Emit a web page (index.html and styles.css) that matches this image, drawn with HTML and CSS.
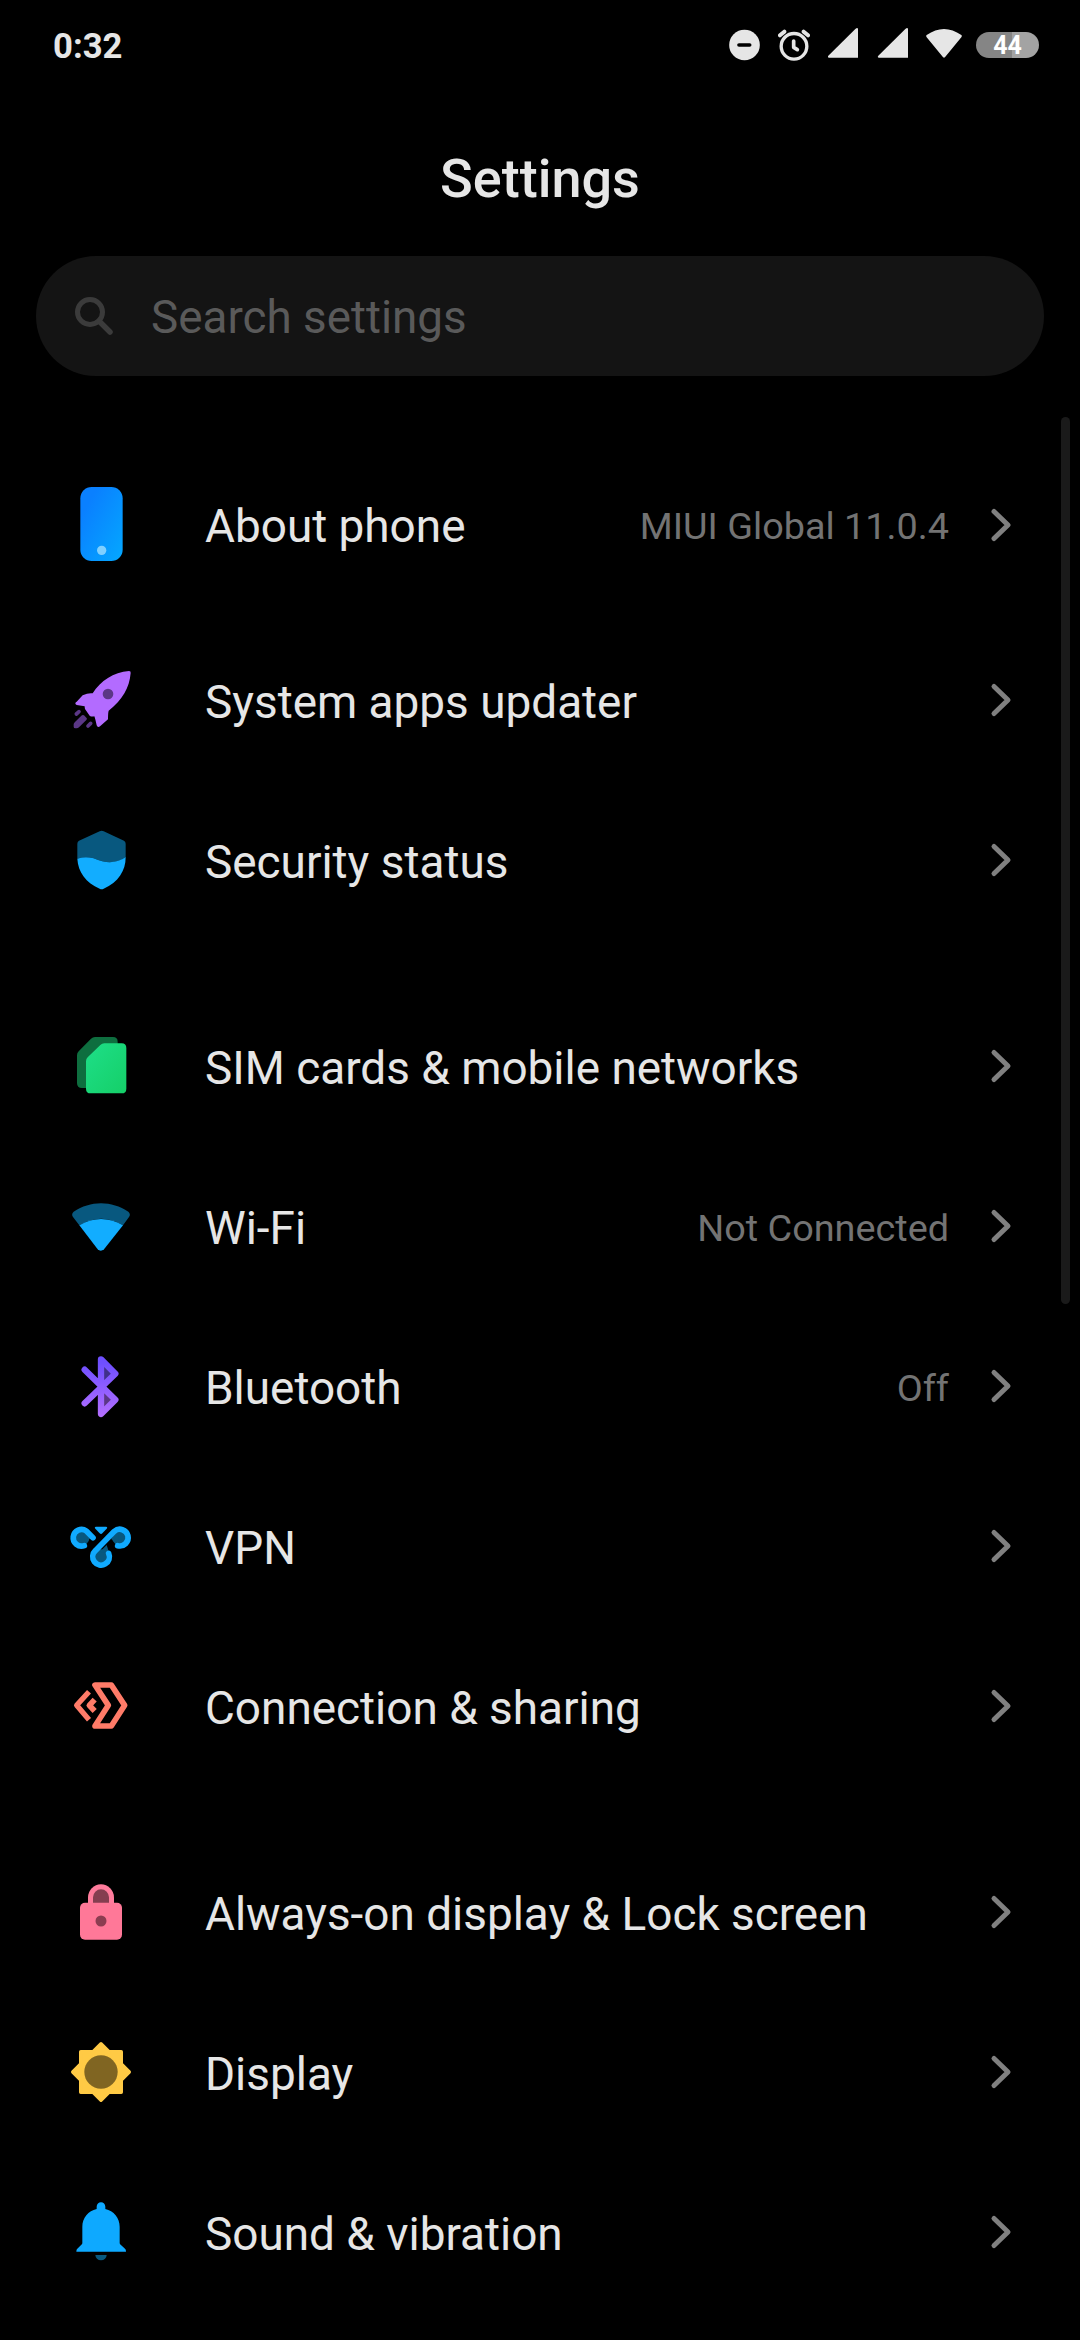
FILE: index.html
```html
<!DOCTYPE html>
<html>
<head>
  <meta charset="UTF-8">
  <title>Settings</title>
  <link rel="stylesheet" href="styles.css">
</head>
<body>
  <div class="statusbar">
    <span class="time">0:32</span>
    <div class="status-icons">
      <svg width="31" height="40" viewBox="87 45 93 120"><circle cx="133.500" cy="105" r="46" fill="#e6e6e6"/><path d="M117 105h32" stroke="#000" stroke-width="11" stroke-linecap="round"/></svg>
      <svg width="32" height="40" viewBox="234 45 96 120" fill="none" stroke="#e6e6e6" stroke-linecap="round" stroke-linejoin="round"><circle cx="282" cy="109" r="38.500" stroke-width="10"/><path d="M281 93v19l11 7" stroke-width="11"/><path d="M240 76l13-11M324 76l-13-11" stroke-width="12"/></svg>
      <svg width="30" height="40" viewBox="384 45 90 120"><path d="M474 57v86h-87q-6-1-2-6l81-80q7-6 8 0z" fill="#e6e6e6"/></svg>
      <svg width="32" height="40" viewBox="528 45 96 120"><path d="M624 57v86h-87q-6-1-2-6l81-80q7-6 8 0z" fill="#e6e6e6"/></svg>
      <svg width="36" height="40" viewBox="678 45 108 120"><path d="M680 75Q732 39 784 75q3 3 0 7l-48 58q-4 5-8 0l-48-58q-3-4 0-7z" fill="#e6e6e6"/></svg>
      <span class="battery">44</span>
    </div>
  </div>

  <h1 class="title">Settings</h1>

  <div class="search">
    <svg class="search-icon" width="40" height="40" viewBox="0 0 40 40" fill="none" stroke="#3b3b3b" stroke-width="5"><circle cx="16" cy="16" r="12.500"/><path d="M25 25l11 11" stroke-width="5.500" stroke-linecap="round"/></svg>
    <span>Search settings</span>
  </div>

  <div class="scrollbar"></div>

  <div class="list">
    <div class="group">
      <div class="row about">
        <svg class="icon" viewBox="0 0 330 330">
          <defs><linearGradient id="phone" x1="0" y1="0" x2="1" y2="1"><stop offset="0.200" stop-color="#0a80ff"/><stop offset="1" stop-color="#04a8ff"/></linearGradient></defs>
          <rect x="91" y="51" width="127" height="222" rx="34" fill="url(#phone)"/><circle cx="155" cy="241" r="14" fill="#80d0ff"/>
        </svg>
        <span class="label">About phone</span>
        <span class="value">MIUI Global 11.0.4</span>
        <svg class="arrow" viewBox="0 0 24 36"><path d="M4 4.500l14 13.500l-14 13.500"/></svg>
      </div>
      <div class="row">
        <svg class="icon" viewBox="0 -15 330 330">
          <path d="M237 63q6 0 5 6c-4 45-24 80-66 113q-2 5-2 26l-23 20q-8 7-11-2-4-19-7-27-9 2-14-2l-14-20q-1-5-1-8l-24-4q-8-5 0-10l18-19q17-8 30-6C152 93 190 66 237 63z" fill="#b36bff"/>
          <circle cx="174" cy="132" r="16" fill="#5b3786"/>
          <path d="M79 192l8-7M114 228l8-8" stroke="#5b3786" stroke-width="11" stroke-linecap="round"/>
          <path d="M94 197q4-4 8-1l7 7q4 3 0 7l-22 22q-3 3-7 3h-4q-5 0-5-5v-7q0-3 4-7z" fill="#5b3786"/>
        </svg>
        <span class="label">System apps updater</span>
        <svg class="arrow" viewBox="0 0 24 36"><path d="M4 4.500l14 13.500l-14 13.500"/></svg>
      </div>
      <div class="row">
        <svg class="icon" viewBox="0 465 330 330">
          <path d="M82 626v-45q0-6 5-9l62-28q6-3 12 0l61 28q5 3 5 9v43q-20 12-48 13-20 0-48-12-25-7-49 1z" fill="#08587f"/>
          <path d="M82 626q24-8 49-1 28 12 48 12 28-1 48-15c0 40-22 75-66 94q-6 3-12 0c-41-18-65-50-67-90z" fill="#12adff"/>
        </svg>
        <span class="label">Security status</span>
        <svg class="arrow" viewBox="0 0 24 36"><path d="M4 4.500l14 13.500l-14 13.500"/></svg>
      </div>
    </div>

    <div class="group">
      <div class="row">
        <svg class="icon" viewBox="0 -27 330 330">
          <defs><linearGradient id="sim" x1="0" y1="0" x2="1" y2="1"><stop offset="0.100" stop-color="#1ddd85"/><stop offset="1" stop-color="#15cf68"/></linearGradient></defs>
          <path d="M135 51h54q14 0 14 14v139h-107q-15 0-15-15v-83q0-7 5-12l37-38q5-5 12-5z" fill="#0e6e3f"/>
          <path d="M163 70h52q14 0 14 14v122q0 14-14 14h-93q-14 0-14-14v-82q0-7 5-12l38-37q5-5 12-5z" fill="url(#sim)"/>
        </svg>
        <span class="label">SIM cards &amp; mobile networks</span>
        <svg class="arrow" viewBox="0 0 24 36"><path d="M4 4.500l14 13.500l-14 13.500"/></svg>
      </div>
      <div class="row">
        <svg class="icon" viewBox="0 453 330 330">
          <path d="M88 616l-19-25q-6-9 2-16c50-34 114-34 164 0q8 7 2 16l-18 25q-65-39-131 0z" fill="#08587f"/>
          <path d="M88 616q65-38 131 0l-57 72q-10 8-19 0z" fill="#12adff"/>
        </svg>
        <span class="label">Wi-Fi</span>
        <span class="value">Not Connected</span>
        <svg class="arrow" viewBox="0 0 24 36"><path d="M4 4.500l14 13.500l-14 13.500"/></svg>
      </div>
      <div class="row">
        <svg class="icon" viewBox="0 -27 330 330">
          <defs><linearGradient id="bt" gradientUnits="userSpaceOnUse" x1="150" y1="50" x2="150" y2="230"><stop offset="0.100" stop-color="#6e4fff"/><stop offset="1" stop-color="#b46fff"/></linearGradient></defs>
          <path d="M153 58l43 43l-43 40z" fill="#40308c"/>
          <path d="M153 141l43 38l-43 43z" fill="#5b3786"/>
          <path d="M104 89l92 90l-43 43V58l43 43l-92 89" fill="none" stroke="url(#bt)" stroke-width="19" stroke-linecap="round" stroke-linejoin="round"/>
        </svg>
        <span class="label">Bluetooth</span>
        <span class="value">Off</span>
        <svg class="arrow" viewBox="0 0 24 36"><path d="M4 4.500l14 13.500l-14 13.500"/></svg>
      </div>
      <div class="row">
        <svg class="icon" viewBox="0 453 330 330">
          <g fill="#08587f"><circle cx="94" cy="593" r="24"/><circle cx="211" cy="593" r="24"/><circle cx="153" cy="652" r="24"/><path d="M100 575l20 20-15 20zM207 573l-24 23 20 20zM150 635l20-20 8 25z"/></g>
          <path d="M103 617a25 25 0 1 1 6-44l20 20M203 617a25 25 0 1 0-10-43l-57 58a25 25 0 1 0 40 8" fill="none" stroke="#10aaff" stroke-width="17" stroke-linecap="round" stroke-linejoin="round"/>
          <path d="M138 560h30q6 1 2 6l-13 14q-4 4-8 0l-13-14q-4-5 2-6z" fill="#10aaff"/>
        </svg>
        <span class="label">VPN</span>
        <svg class="arrow" viewBox="0 0 24 36"><path d="M4 4.500l14 13.500l-14 13.500"/></svg>
      </div>
      <div class="row">
        <svg class="icon" viewBox="0 -27 330 330" fill="none" stroke="#ff7b68" stroke-linejoin="round">
          <path d="M135 75h49l40 61l-40 62h-49l40-62z" stroke-width="17"/>
          <path d="M117 95l-37 41l37 43" stroke-width="16"/>
          <path d="M134 119l-16 17l16 17" stroke-width="17"/>
        </svg>
        <span class="label">Connection &amp; sharing</span>
        <svg class="arrow" viewBox="0 0 24 36"><path d="M4 4.500l14 13.500l-14 13.500"/></svg>
      </div>
    </div>

    <div class="group">
      <div class="row">
        <svg class="icon" viewBox="0 -9 330 330">
          <path d="M114 135v-23a39 39 0 0 1 78 0v23z" fill="#ff7c9c"/>
          <path d="M129 129v-17a24 24 0 0 1 48 0v17z" fill="#843e50"/>
          <rect x="90" y="128" width="126" height="111" rx="15" fill="#ff7898"/><circle cx="153" cy="183" r="16.500" fill="#8c3d51"/>
        </svg>
        <span class="label">Always-on display &amp; Lock screen</span>
        <svg class="arrow" viewBox="0 0 24 36"><path d="M4 4.500l14 13.500l-14 13.500"/></svg>
      </div>
      <div class="row">
        <svg class="icon" viewBox="0 471 330 330">
          <path d="M153 551l24 24h37v37l24 24l-24 24v37h-37l-24 24l-24-24h-37v-37l-24-24l24-24v-37h37z" fill="#ffca45" stroke="#ffca45" stroke-width="10" stroke-linejoin="round"/>
          <circle cx="153" cy="636" r="50" fill="#806522"/>
        </svg>
        <span class="label">Display</span>
        <svg class="arrow" viewBox="0 0 24 36"><path d="M4 4.500l14 13.500l-14 13.500"/></svg>
      </div>
      <div class="row">
        <svg class="icon" viewBox="0 -9 330 330">
          <path d="M136 225h34a17 16 0 0 1-34 0z" fill="#08587f"/>
          <path d="M140 87v-7a13 13 0 0 1 26 0v7c25 5 43 27 43 53v49q0 3 3 5l13 12q3 2 3 9H79q0-7 3-9l12-12q3-2 3-5v-49c0-26 18-48 43-53z" fill="#0ea9ff"/>
        </svg>
        <span class="label">Sound &amp; vibration</span>
        <svg class="arrow" viewBox="0 0 24 36"><path d="M4 4.500l14 13.500l-14 13.500"/></svg>
      </div>
    </div>
  </div>
</body>
</html>
```
FILE: styles.css
```css
* {
  margin: 0;
  padding: 0;
  box-sizing: border-box;
}
body {
  height: 2340px;
  background: #000;
  color: #e6e6e6;
  font-family: Roboto, sans-serif;
  overflow: hidden;
}
svg {
  display: block;
  flex: none;
}
.statusbar {
  display: flex;
  justify-content: space-between;
  align-items: center;
  height: 90px;
  padding: 0 41px 0 53px;
}
.time {
  font-size: 34.7px;
  font-weight: 700;
  line-height: 40px;
  padding-top: 2px;
}
.status-icons {
  display: flex;
  align-items: center;
  gap: 18px;
}
.battery {
  width: 63px;
  height: 26px;
  margin-left: -4px;
  border-radius: 13px;
  background: linear-gradient(to right, #858585 57%, #a3a3a3 57%);
  color: #fff;
  font-size: 25px;
  font-weight: 700;
  line-height: 28px;
  text-align: center;
}
.title {
  height: 166px;
  font-size: 54px;
  font-weight: 500;
  line-height: 178px;
  text-align: center;
}
.search {
  display: flex;
  align-items: center;
  height: 120px;
  margin: 0 36px;
  padding-left: 38px;
  border-radius: 60px;
  background: #141414;
  color: #5a5a5a;
  font-size: 45.800px;
}
.search-icon {
  margin-right: 37px;
}
.search span {
  padding-top: 3px;
}
/* floats over the list */
.scrollbar {
  position: absolute;
  top: 417px;
  right: 10px;
  width: 9px;
  height: 887px;
  border-radius: 5px;
  background: #1a1a1a;
}
.list {
  padding-top: 54px;
}
.group {
  margin-bottom: 46px;
}
.row {
  display: flex;
  align-items: center;
  height: 160px;
  padding: 0 66px 0 50px;
}
.row.about {
  height: 190px;
}
.icon {
  width: 110px;
  height: 110px;
  margin-right: 45px;
}
.label {
  flex: 1;
  font-size: 45.900px;
  white-space: nowrap;
  padding-top: 3px;
}
.about .label {
  padding-top: 1px;
}
.value {
  color: #737373;
  font-size: 37.800px;
  padding-top: 3px;
}
.about .value {
  padding-top: 2px;
}
.arrow {
  width: 24px;
  height: 36px;
  margin-left: 41px;
  fill: none;
  stroke: #808080;
  stroke-width: 5;
  stroke-linecap: round;
  stroke-linejoin: round;
}
```
